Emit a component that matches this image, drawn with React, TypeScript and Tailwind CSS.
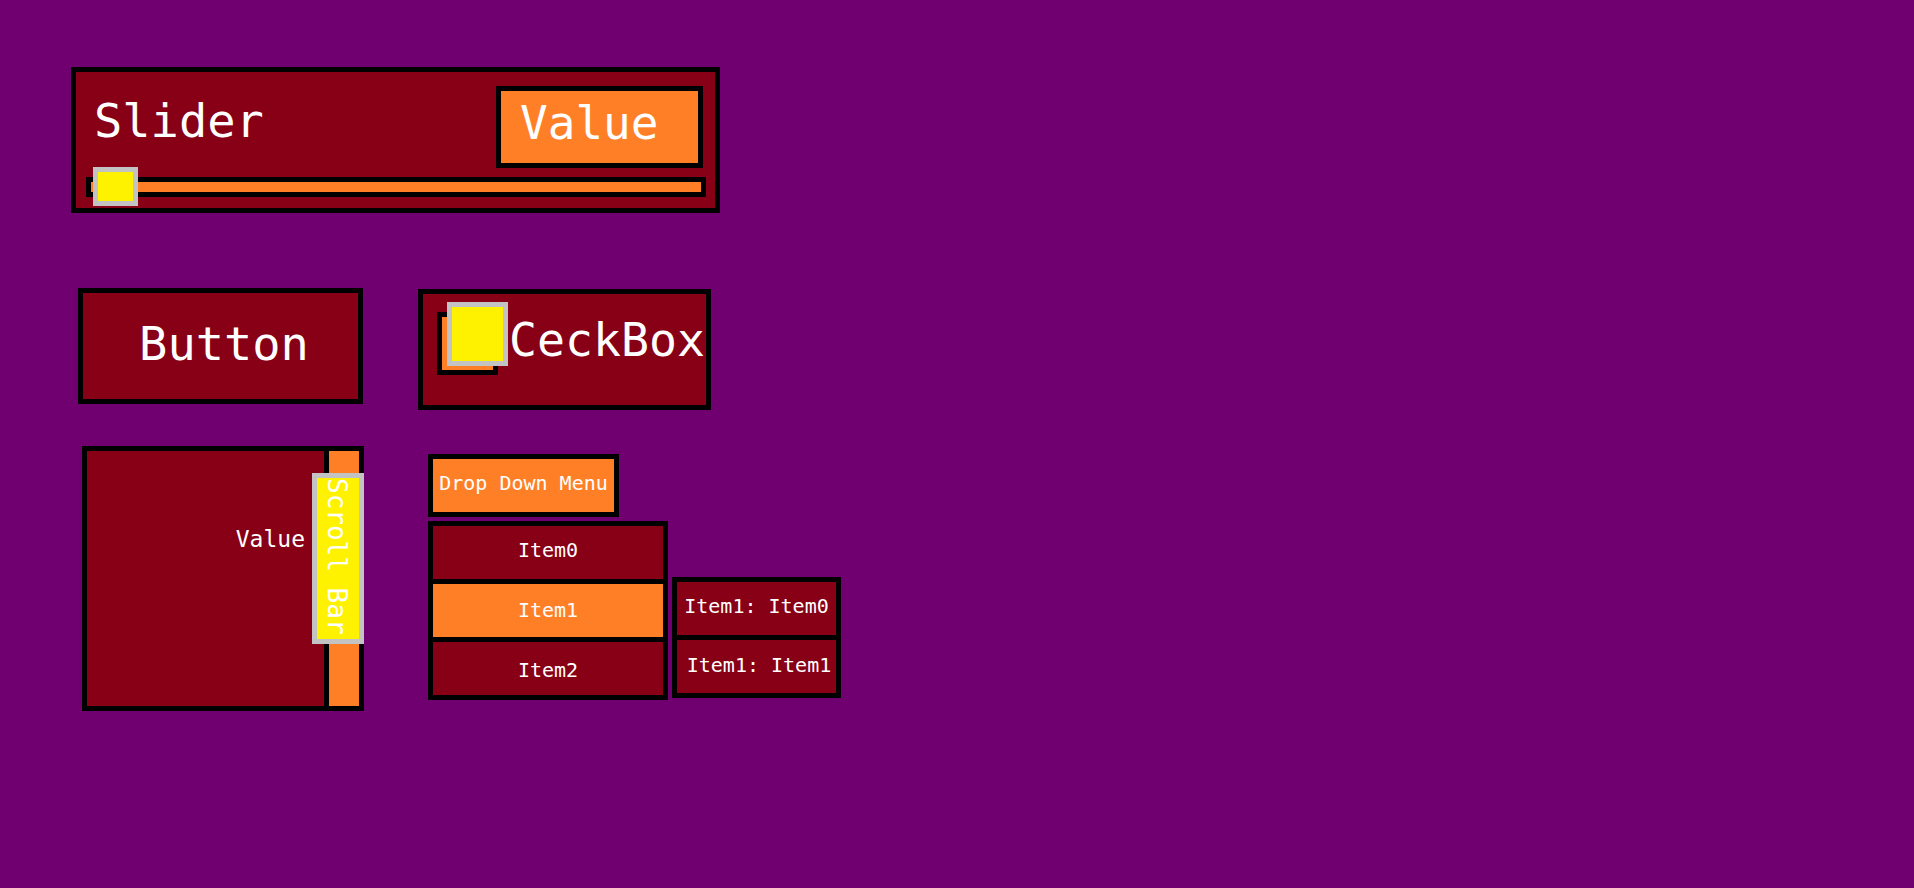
const font = { fontFamily: '"DejaVu Sans Mono", "Liberation Mono", monospace' };

function Slider() {
  return (
    <div className="w-[649px] h-[146px] border-[5px] border-black bg-[#880015] flex flex-col">
      <div className="flex items-start justify-between h-[96px]">
        <span className="ml-[18px] mt-[21px] text-[47px] text-white">Slider</span>
        <div className="mt-[14px] mr-[12px] w-[207px] h-[82px] border-[5px] border-black bg-[#ff7f27] pl-[19px] pt-[5px]">
          <span className="text-[46px] text-white">Value</span>
        </div>
      </div>
      <div className="relative ml-[10px] mt-[9px] w-[620px] h-[20px] border-[5px] border-black bg-[#ff7f27]">
        <div className="absolute left-[2px] top-[-15px] w-[45px] h-[39px] border-[5px] border-[#c3c3c3] bg-[#fff200]" />
      </div>
    </div>
  );
}

function Button() {
  return (
    <div className="w-[285px] h-[116px] border-[5px] border-black bg-[#880015] flex items-center justify-center pl-[7px] pb-[5px]">
      <span className="text-[47px] text-white">Button</span>
    </div>
  );
}

function CheckBox() {
  return (
    <div className="w-[293px] h-[121px] border-[5px] border-black bg-[#880015] flex items-start">
      <div className="relative ml-[14px] mt-[18px] w-[61px] h-[63px] border-[5px] border-black bg-[#ff7f27] shrink-0">
        <div className="absolute left-[5px] top-[-15px] w-[61px] h-[64px] border-[5px] border-[#c3c3c3] bg-[#fff200]" />
      </div>
      <span className="ml-[11px] mt-[19px] text-[46.5px] text-white whitespace-nowrap">CeckBox</span>
    </div>
  );
}

function ScrollArea() {
  return (
    <div className="relative w-[282px] h-[265px] border-[5px] border-black bg-[#880015] flex">
      <div className="w-[242px] h-full border-r-[5px] border-black flex justify-end items-start pr-[19px] pt-[75px]">
        <span className="text-[23px] text-white">Value</span>
      </div>
      <div className="w-[30px] h-full bg-[#ff7f27]" />
      <div className="absolute left-[225px] top-[22px] w-[52px] h-[171px] border-[5px] border-[#c3c3c3] bg-[#fff200] flex">
        <span className="ml-[5px] text-[26px] text-white [writing-mode:vertical-rl] whitespace-nowrap">Scroll Bar</span>
      </div>
    </div>
  );
}

const itemPad = ['pb-[5px]', 'pb-[1px]', 'pt-[2px]'];

function DropDown() {
  const items = ['Item0', 'Item1', 'Item2'];
  return (
    <div className="flex flex-col items-start gap-[4px]">
      <div className="w-[191px] h-[63px] border-[5px] border-black bg-[#ff7f27] flex items-center justify-center pb-[5px]">
        <span className="text-[20px] text-white whitespace-nowrap">Drop Down Menu</span>
      </div>
      <div className="w-[240px] bg-black p-[5px] flex flex-col gap-[5px]">
        {items.map((it, i) => (
          <div
            key={it}
            className={
              'h-[53px] flex items-center justify-center ' +
              itemPad[i] +
              ' ' +
              (i === 1 ? 'bg-[#ff7f27]' : 'bg-[#880015]')
            }
          >
            <span className="text-[20px] text-white">{it}</span>
          </div>
        ))}
      </div>
    </div>
  );
}

function SubMenu() {
  return (
    <div className="w-[169px] bg-black p-[5px] flex flex-col gap-[5px]">
      <div className="h-[53px] bg-[#880015] flex items-center justify-center pb-[5px]">
        <span className="text-[20px] text-white whitespace-nowrap">Item1: Item0</span>
      </div>
      <div className="h-[53px] bg-[#880015] flex items-center justify-center pb-[3px] pl-[5px]">
        <span className="text-[20px] text-white whitespace-nowrap">Item1: Item1</span>
      </div>
    </div>
  );
}

export default function App() {
  return (
    <div className="min-h-screen w-full bg-[#700070] pt-[67px] leading-[normal]" style={font}>
      <div className="ml-[71px]">
        <Slider />
      </div>
      <div className="mt-[75px] flex items-start">
        <div className="ml-[78px]">
          <Button />
        </div>
        <div className="ml-[55px] mt-[1px]">
          <CheckBox />
        </div>
      </div>
      <div className="mt-[36px] flex items-start">
        <div className="ml-[82px]">
          <ScrollArea />
        </div>
        <div className="ml-[64px] mt-[8px]">
          <DropDown />
        </div>
        <div className="ml-[4px] mt-[131px]">
          <SubMenu />
        </div>
      </div>
    </div>
  );
}
